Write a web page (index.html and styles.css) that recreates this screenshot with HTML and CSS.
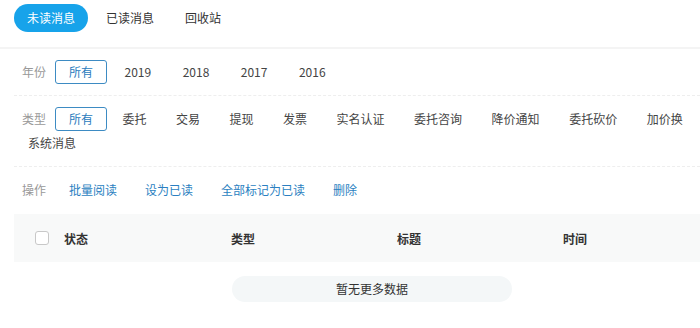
FILE: index.html
```html
<!DOCTYPE html>
<html lang="zh-CN">
<head>
    <meta charset="UTF-8">
    <meta name="viewport" content="width=device-width, initial-scale=1.0">
    <title>消息中心</title>
    <link rel="stylesheet" href="styles.css">
</head>
<body>
    <div class="tabs">
        <a class="tab active">未读消息</a>
        <a class="tab">已读消息</a>
        <a class="tab">回收站</a>
    </div>
    <div class="filters">
        <div class="filter-row year-row">
            <span class="filter-label">年份</span>
            <span class="opt selected">所有</span>
            <span class="opt">2019</span>
            <span class="opt">2018</span>
            <span class="opt">2017</span>
            <span class="opt">2016</span>
        </div>
        <div class="filter-row type-row">
            <span class="filter-label">类型</span>
            <span class="opt selected">所有</span>
            <span class="opt">委托</span>
            <span class="opt">交易</span>
            <span class="opt">提现</span>
            <span class="opt">发票</span>
            <span class="opt">实名认证</span>
            <span class="opt">委托咨询</span>
            <span class="opt">降价通知</span>
            <span class="opt">委托砍价</span>
            <span class="opt">加价换</span>
            <span class="opt">系统消息</span>
        </div>
        <div class="filter-row ops-row">
            <span class="filter-label">操作</span>
            <a class="opt">批量阅读</a>
            <a class="opt">设为已读</a>
            <a class="opt">全部标记为已读</a>
            <a class="opt">删除</a>
        </div>
    </div>
    <div class="table-head">
        <div class="th-check"><span class="checkbox"></span></div>
        <div class="th">状态</div>
        <div class="th narrow">类型</div>
        <div class="th narrow">标题</div>
        <div class="th last">时间</div>
    </div>
    <div class="empty">暂无更多数据</div>
</body>
</html>
```

FILE: styles.css
```css
body {
    margin: 0;
    font-family: "Noto Sans CJK SC", "Noto Sans", sans-serif;
    font-size: 12px;
    color: #333;
    background: #fff;
}
.tabs {
    display: flex;
    gap: 5px;
    padding: 4px 14px 15px;
    border-bottom: 2px solid #f4f4f4;
}
.tab {
    height: 28px;
    line-height: 28px;
    padding: 0 13px;
    border-radius: 14px;
    color: #333;
    cursor: pointer;
}
.tab.active {
    background-color: #17a3ea;
    color: #fff;
}
.filters {
    margin-left: 14px;
}
.filter-row {
    display: flex;
    flex-wrap: wrap;
    padding: 11px 0;
    border-bottom: 1px dashed #eee;
}
.year-row {
    column-gap: 3.5px;
}
.type-row {
    column-gap: 1.5px;
}
.ops-row {
    padding-bottom: 12px;
    border-bottom: none;
}
.filter-label {
    width: 41px;
    margin-right: -1.5px;
    padding-left: 8px;
    box-sizing: border-box;
    line-height: 24px;
    color: #999;
}
.year-row .filter-label {
    margin-right: -3.5px;
}
.opt {
    height: 24px;
    line-height: 22px;
    padding: 0 13px;
    border: 1px solid transparent;
    border-radius: 3px;
    box-sizing: border-box;
    color: #444;
    cursor: pointer;
}
.opt.selected {
    border-color: #3d8bc3;
    color: #2a7bbd;
}
.ops-row .opt {
    border: none;
    padding: 0 14px;
    line-height: 24px;
    color: #2b7fc1;
}
.ops-row .filter-label {
    margin-right: 0;
}
.table-head {
    display: flex;
    align-items: center;
    height: 48px;
    margin-left: 14px;
    background-color: #f8f9f9;
    font-weight: bold;
    color: #333;
}
.th-check {
    width: 50px;
    padding-left: 21px;
    box-sizing: border-box;
    display: flex;
}
.checkbox {
    width: 14px;
    height: 14px;
    border: 1px solid #c8c8c8;
    border-radius: 3px;
    box-sizing: border-box;
    background: #fff;
}
.th {
    width: 167px;
}
.th.narrow {
    width: 166px;
}
.th.last {
    flex: 1;
}
.empty {
    width: 280px;
    height: 26px;
    line-height: 26px;
    margin: 14px 0 0 232px;
    border-radius: 13px;
    background-color: #f4f7f8;
    text-align: center;
    color: #333;
}
```
